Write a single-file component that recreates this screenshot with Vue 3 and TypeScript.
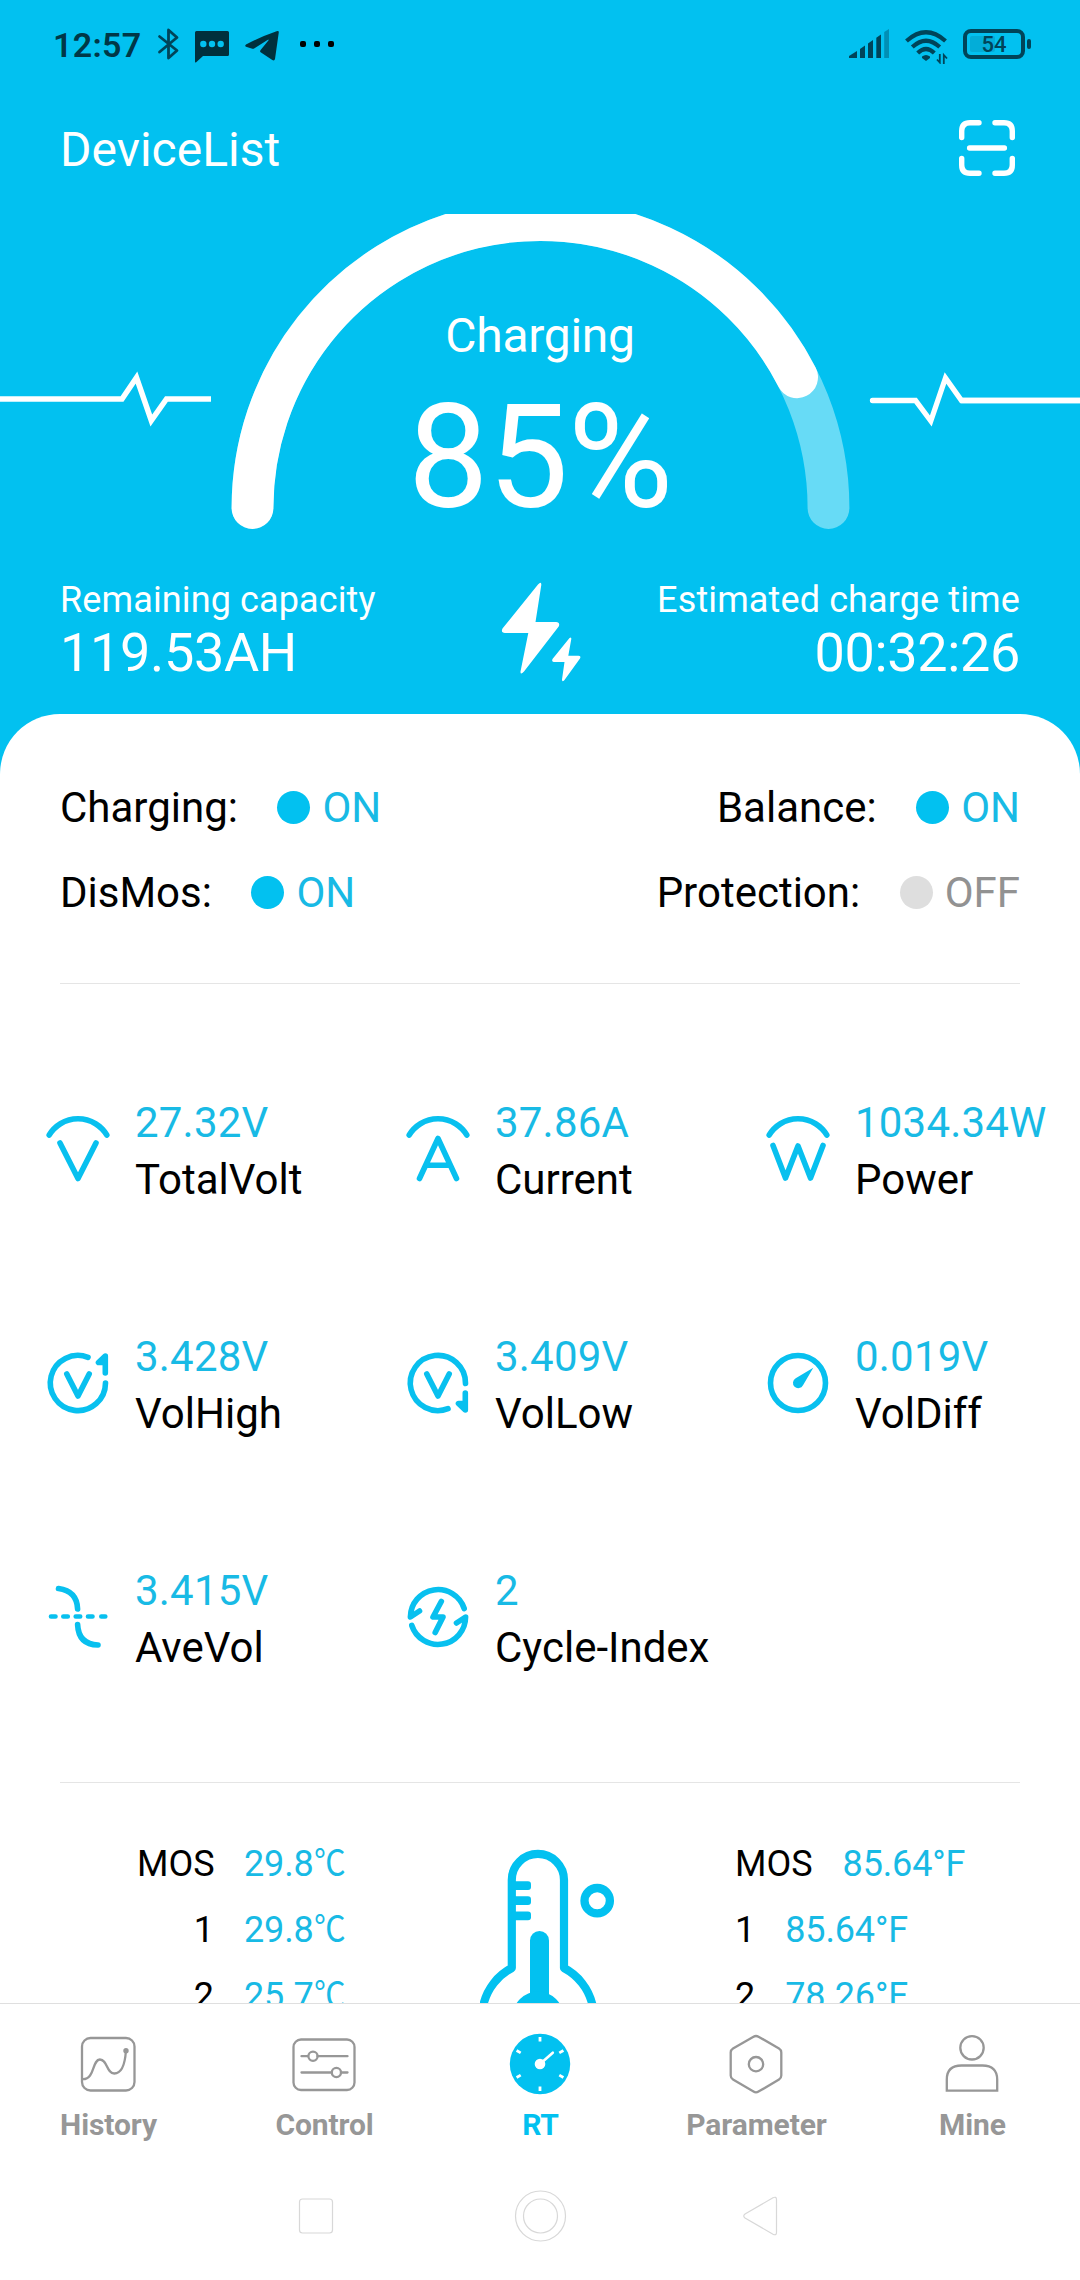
<script setup lang="ts">
interface SwitchState { label: string; on: boolean }
interface Metric { icon: string; value: string; label: string }
interface Temp { label: string; c: string; f: string }
interface Tab { icon: string; label: string; active?: boolean }

const switchRows: SwitchState[][] = [
  [{ label: 'Charging:', on: true }, { label: 'Balance:', on: true }],
  [{ label: 'DisMos:', on: true }, { label: 'Protection:', on: false }],
]

const metrics: Metric[] = [
  { icon: 'volt', value: '27.32V', label: 'TotalVolt' },
  { icon: 'amp', value: '37.86A', label: 'Current' },
  { icon: 'watt', value: '1034.34W', label: 'Power' },
  { icon: 'high', value: '3.428V', label: 'VolHigh' },
  { icon: 'low', value: '3.409V', label: 'VolLow' },
  { icon: 'diff', value: '0.019V', label: 'VolDiff' },
  { icon: 'avg', value: '3.415V', label: 'AveVol' },
  { icon: 'cycle', value: '2', label: 'Cycle-Index' },
]

const temps: Temp[] = [
  { label: 'MOS', c: '29.8', f: '85.64°F' },
  { label: '1', c: '29.8', f: '85.64°F' },
  { label: '2', c: '25.7', f: '78.26°F' },
]

const tabs: Tab[] = [
  { icon: 'history', label: 'History' },
  { icon: 'control', label: 'Control' },
  { icon: 'rt', label: 'RT', active: true },
  { icon: 'parameter', label: 'Parameter' },
  { icon: 'mine', label: 'Mine' },
]

const charge = 85
const radius = 288
const angle = Math.PI * (1 - charge / 100)
const arcEnd = `${(540.5 + radius * Math.cos(angle)).toFixed(2)} ${(508 - radius * Math.sin(angle)).toFixed(2)}`
</script>

<template>
  <div class="screen">
    <div class="hero">
      <header class="status">
        <span class="time">12:57</span>
        <svg class="bt" width="24" height="36" viewBox="0 0 24 36">
          <path d="M2.500 10.500L20 24.500L11.500 32V4L20 11.500L2.500 26" fill="none" stroke="#004459" stroke-width="2.800" stroke-linejoin="round" stroke-linecap="round" />
        </svg>
        <svg class="msg" width="34" height="32" viewBox="0 0 34 32">
          <path d="M1.500 0H32.500Q34 0 34 1.500V23.500Q34 25 32.500 25H8L1.200 31.200Q0 32 0 30.500V1.500Q0 0 1.500 0Z" fill="#00303d" />
          <g fill="#02c1f0"><circle cx="8.300" cy="13" r="3.200" /><circle cx="17" cy="13" r="3.200" /><circle cx="25.700" cy="13" r="3.200" /></g>
        </svg>
        <svg class="tg" width="34" height="30" viewBox="0 0 34 30">
          <path d="M33.800 1.200L30 28Q29.400 30.200 27.300 29L16 21.600Q14.400 20.400 15.600 18.900L23.600 9.200Q23.800 8.200 22.500 8.900L9.500 17.300Q8.200 18.200 6.600 17.600L1 15.800Q-.6 14.900 1 13.600Q16 5.500 31.600 .2Q33.900 -.5 33.800 1.200Z" fill="#00303d" />
        </svg>
        <span class="dots"><i /><i /><i /></span>
        <span class="spacer" />
        <svg class="sig" width="40" height="30" viewBox="0 0 40 30" fill="#004459">
          <path d="M0 29V27L8 22V29Z" /><path d="M11 29V20L16 16.500V29Z" /><path d="M19 29V14.500L24 11V29Z" /><path d="M27.300 29V8.700L32 5.500V29Z" />
          <path d="M35.200 29V3L40 0V29Z" opacity=".4" />
        </svg>
        <svg class="wifi" width="44" height="34" viewBox="0 0 44 34">
          <g fill="none" stroke="#004459" stroke-width="4.200">
            <path d="M1.500 11Q21 -6.500 40.500 11" /><path d="M7.300 17Q21 4.500 34.700 17" /><path d="M12.700 23Q21 15 29.300 23" />
          </g>
          <path d="M17 26.500Q21 23.500 25 26.500V28L21 31L17 28Z" fill="#004459" />
          <path d="M34.800 24V32.500L32 29.500M38.800 34V25L42 28.500" fill="none" stroke="#004459" stroke-width="1.800" />
        </svg>
        <span class="battery"><span class="level" /><b>54</b></span><span class="nub" />
      </header>

      <div class="titlebar">
        <span>DeviceList</span>
        <svg width="60" height="60" viewBox="-30 -30 60 60" fill="none" stroke="#fff" stroke-width="5.400" stroke-linecap="round" stroke-linejoin="round">
          <path d="M-25.300 -10.500V-17Q-25.300 -25.300 -17 -25.300H-8M8 -25.300H17Q25.300 -25.300 25.300 -17V-10.500M25.300 10.500V17Q25.300 25.300 17 25.300H8M-8 25.300H-17Q-25.300 25.300 -25.300 17V10.500M-17.400 0H17.400" />
        </svg>
      </div>

      <div class="gauge">
        <svg width="1080" height="326" viewBox="0 214 1080 326" fill="none" stroke="#fff">
          <path d="M252.500 508A288 288 0 0 1 828.500 508" stroke="#67dbf6" stroke-width="41.800" stroke-linecap="round" />
          <path :d="`M252.500 508A288 288 0 0 1 ${arcEnd}`" stroke-width="41.800" stroke-linecap="round" />
          <path d="M0 399H122L136.500 377.500L151.300 420.500L166.500 399H211" stroke-width="5.500" stroke-miterlimit="10" />
          <path d="M961 400.500H1080" stroke-width="5.500" />
          <path d="M872.500 400.500H915.500L930.800 421L945.500 378L961.500 400.500H1080" stroke-width="5.300" stroke-miterlimit="10" stroke-linecap="round" />
        </svg>
        <div class="reading">
          <div class="mode">Charging</div>
          <div class="percent">{{ charge }}%</div>
        </div>
      </div>

      <div class="stats">
        <div><p>Remaining capacity</p><strong>119.53AH</strong></div>
        <svg width="84" height="104" viewBox="499 580 84 104" fill="#fff">
          <path d="M538 584.500Q541.500 581 541.300 585L535.500 622H556Q560.500 622.300 558.700 626.500L524 671.500Q520.300 675.500 520.500 671.500L528.300 633H505Q500.500 632.500 502.500 628.500Z" />
          <path d="M569.500 638Q571.500 636.500 571.300 639L568.300 655.700H578.500Q581.300 656 580 658.500L564.300 680.300Q562 682.500 562 679.500L564.500 662H554Q551.300 661.500 552.500 659Z" />
        </svg>
        <div class="right"><p>Estimated charge time</p><strong>00:32:26</strong></div>
      </div>

      <main class="card">
        <section class="switches">
          <div v-for="(row, i) in switchRows" :key="i" class="switch-row">
            <div v-for="s in row" :key="s.label" class="switch" :class="{ off: !s.on }">
              <span>{{ s.label }}</span><i /><em>{{ s.on ? 'ON' : 'OFF' }}</em>
            </div>
          </div>
        </section>
        <hr>
        <section class="metrics">
          <div v-for="m in metrics" :key="m.label" class="metric">
            <svg width="72" height="72" viewBox="-36 -36 72 72" fill="none" stroke="#08c0ef" stroke-width="5.600" stroke-linecap="round" stroke-linejoin="round">
              <path v-if="['volt', 'amp', 'watt'].includes(m.icon)" d="M-28.800 -14A33.700 33.700 0 0 1 28.800 -14" />
              <path v-if="m.icon === 'volt'" d="M-18 -6L0 29.500L18 -6" />
              <path v-else-if="m.icon === 'amp'" d="M-18.500 29.500L0 -10.500L18.500 29.500M-12 16.300H12" />
              <path v-else-if="m.icon === 'watt'" d="M-25 -3.500L-12.500 29L0 -3L12.500 29L25 -3.500" />
              <template v-else-if="m.icon === 'high'">
                <path d="M10 -25.700A27.600 27.600 0 1 0 27.500 0M-11.200 -9L0 13L11.200 -9" />
                <path d="M27.300 -10V-27L20.500 -20.500H27.300" fill="#08c0ef" />
              </template>
              <template v-else-if="m.icon === 'low'">
                <path d="M27.500 0.500A27.600 27.600 0 1 0 10 25.700M-11.200 -9L0 13L11.200 -9" />
                <path d="M27.300 10V27L20.500 20.500H27.300" fill="#08c0ef" />
              </template>
              <template v-else-if="m.icon === 'diff'">
                <circle r="27.500" />
                <path d="M15.300 -15.300L5 2.200A5.300 5.300 0 1 1 -2.300 -4.800Z" fill="#08c0ef" stroke="none" />
              </template>
              <template v-else-if="m.icon === 'avg'">
                <path d="M-19.500 -28.500Q-1 -26 -.4 -8M-.4 7.500Q.5 27.500 20 28" />
                <path d="M-27 -.5H-22.500M-14.700 -.5H-10.200M-2.300 -.5H2.200M10 -.5H14.500M23.300 -.5H27.300" stroke-width="4.600" />
              </template>
              <template v-else>
                <path d="M26.200 -8.500A27.600 27.600 0 0 0 -27.600 0L-18.500 -6M-26.200 8.500A27.600 27.600 0 0 0 27.600 0L18.500 6" />
                <path d="M3.300 -15.500L-5 0H5L-2.800 15.500" />
              </template>
            </svg>
            <div class="metric-text"><span>{{ m.value }}</span><span>{{ m.label }}</span></div>
          </div>
        </section>
        <hr>
        <section class="temps">
          <div class="temp-col celsius">
            <div v-for="t in temps" :key="t.label" class="temp"><span>{{ t.label }}</span><em>{{ t.c }}<u>℃</u></em></div>
          </div>
          <div class="thermo">
            <svg width="140" height="240" viewBox="480 1845 140 240" fill="none" stroke="#02c1f0" stroke-width="8.200" stroke-linejoin="round">
              <path d="M511.800 1968V1880A26.100 26.100 0 0 1 564 1880V1968A56 56 0 1 1 511.800 1968Z" />
              <g fill="#02c1f0" stroke="none">
                <rect x="511" y="1881.300" width="20" height="8.700" rx="3" /><rect x="511" y="1896.300" width="20" height="8.700" rx="3" /><rect x="511" y="1911.500" width="20" height="8.700" rx="3" />
                <rect x="530" y="1931" width="19" height="80" rx="9.500" /><circle cx="538" cy="2017" r="25.500" />
              </g>
              <circle cx="597.200" cy="1900.700" r="12.700" stroke-width="8.300" />
            </svg>
          </div>
          <div class="temp-col">
            <div v-for="t in temps" :key="t.label" class="temp"><span>{{ t.label }}</span><em>{{ t.f }}</em></div>
          </div>
        </section>
      </main>
    </div>

    <nav class="tabs">
      <div v-for="t in tabs" :key="t.label" class="tab" :class="{ active: t.active }">
        <svg width="72" height="72" viewBox="-36 -36 72 72" fill="none" stroke="#979797" stroke-width="2.300" stroke-linecap="round" stroke-linejoin="round">
          <template v-if="t.icon === 'history'">
            <rect x="-26" y="-26" width="52.500" height="52.500" rx="8.500" />
            <path d="M-25 15.200C-13 15.200 -16 -4.500 -8.100 -4.500C-.5 -4.500 -1.500 9.500 6.300 9.500C13.500 9.500 17 0 17.900 -13" />
            <circle cx="18" cy="-13.300" r="2.700" fill="#979797" stroke="none" />
          </template>
          <template v-else-if="t.icon === 'control'">
            <rect x="-30.500" y="-24.500" width="61" height="50.500" rx="7.500" />
            <path d="M-22.500 -7.800H-16M-6.500 -7.800H23.500M-22.500 8.500H7.500M17 8.500H23.500" />
            <circle cx="-11" cy="-7.800" r="4.600" /><circle cx="12.400" cy="8.500" r="4.600" />
          </template>
          <template v-else-if="t.icon === 'rt'">
            <circle r="30.200" fill="#02c1f0" stroke="none" />
            <circle r="5.300" fill="#fff" stroke="none" />
            <path d="M0 0L12.800 -11.300" stroke="#fff" stroke-width="2.600" />
            <path d="M0 -27V-22.500M0 22.500V27M19.300 -11.100L23.400 -13.500M19.300 11.100L23.400 13.500M-19.300 -11.100L-23.400 -13.500M-19.300 11.100L-23.400 13.500" stroke="#fff" stroke-width="2.800" stroke-linecap="butt" />
          </template>
          <template v-else-if="t.icon === 'parameter'">
            <path d="M-2.500 -27.300Q0 -28.700 2.500 -27.300L23 -15.600Q25.300 -14.200 25.300 -11.500V11.500Q25.300 14.200 23 15.600L2.500 27.600Q0 29 -2.500 27.600L-23 15.600Q-25.300 14.200 -25.300 11.500V-11.500Q-25.300 -14.200 -23 -15.600Z" />
            <circle cy=".2" r="7.200" />
          </template>
          <template v-else>
            <circle cy="-16.200" r="11.700" />
            <path d="M-25.200 26.700V15.500Q-25.200 1.500 -10.500 1.500H10.500Q25.200 1.500 25.200 15.500V26.700Z" stroke-linejoin="miter" />
          </template>
        </svg>
        <span>{{ t.label }}</span>
      </div>
    </nav>

    <footer class="sysnav">
      <svg width="60" height="60" viewBox="-30 -30 60 60"><rect x="-16.500" y="-17" width="33" height="34" rx="3" /></svg>
      <svg width="60" height="60" viewBox="-30 -30 60 60"><circle cx=".5" r="25" /><circle cx=".5" r="17" /></svg>
      <svg width="60" height="60" viewBox="-30 -30 60 60"><path d="M-19 -2L9 -18.300Q12.500 -19.800 12.500 -16.500V16.500Q12.500 19.800 9 18.300L-19 2Q-21.500 0 -19 -2Z" /></svg>
    </footer>
  </div>
</template>

<style>
body { background: #fff; }
</style>

<style scoped>
.screen {
  width: 1080px;
  height: 2280px;
  display: flex;
  flex-direction: column;
  overflow: hidden;
  background: #fff;
  color: #000;
  font-family: Roboto, "Noto Sans CJK SC", sans-serif;
}
.hero { height: 2003px; flex: none; display: flex; flex-direction: column; background: #02c1f0; }
.status { height: 88px; flex: none; display: flex; align-items: center; box-sizing: border-box; padding: 0 49px 0 53px; }
.time { font-size: 34px; font-weight: 600; color: #003747; line-height: 40px; width: 104px; letter-spacing: .3px; margin-top: 2px; }
.msg { margin: 5px 0 0 14px; }
.tg { margin: 3px 0 0 16px; }
.dots { display: flex; gap: 8px; margin-left: 21px; }
.dots i { width: 6px; height: 6px; border-radius: 2px; background: #000; }
.spacer { flex: 1; }
.sig { margin-right: 16px; }
.wifi { margin: 6px 14px 0 0; }
.battery {
  position: relative; width: 62px; height: 30px; box-sizing: border-box; border: 4px solid #004459; border-radius: 8px;
  display: flex; justify-content: center; align-items: center;
}
.level { position: absolute; left: 3px; top: 3px; width: 25px; height: 16px; border-radius: 2px; background: #03add8; }
.battery b { position: relative; font-size: 22px; font-weight: 500; line-height: 22px; color: #004459; padding-top: 2px; }
.nub { width: 4px; height: 10px; border-radius: 2px; background: #004459; margin-left: 2px; }

.titlebar {
  height: 126px; flex: none; display: flex; justify-content: space-between; align-items: center;
  box-sizing: border-box; padding: 0 63px 3px 60px; color: #fff; font-size: 48px;
}
.titlebar svg { margin-bottom: 3px; }

.gauge { display: grid; height: 326px; flex: none; overflow: hidden; }
.gauge > * { grid-area: 1 / 1; }
.reading { display: flex; flex-direction: column; align-items: center; color: #fff; padding-top: 92px; }
.mode { font-size: 48px; line-height: 60px; letter-spacing: -.3px; }
.percent { font-size: 144px; line-height: 164px; height: 164px; margin-top: 10px; letter-spacing: -1px; }

.stats {
  height: 174px; flex: none; box-sizing: border-box; padding: 39px 60px 0; color: #fff;
  display: grid; grid-template-columns: 1fr auto 1fr; align-items: start;
}
.stats svg { margin-top: 1px; position: relative; left: 1px; }
.stats p { margin: 0; font-size: 36px; line-height: 42px; letter-spacing: .12px; }
.stats strong { display: block; font-size: 54px; font-weight: 400; line-height: 64px; letter-spacing: -.35px; }
.right { text-align: right; }

.card { flex: 1; min-height: 0; overflow: hidden; background: #fff; border-radius: 60px 60px 0 0; }
hr { height: 1px; border: 0; margin: 0 60px; background: #e5e5e5; }
.switches { padding: 51px 60px 48px; }
.switch-row { height: 85px; display: flex; justify-content: space-between; align-items: center; font-size: 42px; }
.switch { display: flex; align-items: center; }
.switch i { width: 33px; height: 33px; border-radius: 50%; background: #02c1f0; margin: 0 12px 0 39.500px; }
em { font-style: normal; color: #18bae5; }
.switch.off i { background: #dedede; }
.switch.off em { color: #929292; }

.metrics { display: grid; grid-template-columns: repeat(3, 360px); grid-auto-rows: 234px; padding: 48px 0; }
.metric { display: flex; align-items: center; padding-left: 42px; gap: 21px; }
.metric svg { flex: none; }
.metric-text { display: flex; flex-direction: column; font-size: 42px; line-height: 57px; padding-top: 4px; }
.metric-text span:first-child { color: #18bae5; letter-spacing: .2px; }

.temps { display: grid; grid-template-columns: repeat(3, 360px); font-size: 36px; line-height: 66px; }
.temp-col { padding: 48px 0 0 15px; }
.celsius { padding-left: 137px; }
.temp { display: flex; gap: 30px; white-space: nowrap; height: 66px; }
.temp em { letter-spacing: -.15px; }
.celsius .temp span { width: 77px; text-align: right; }
.temp u { display: inline-block; text-decoration: none; transform: scaleX(.88); transform-origin: 0 50%; }
.thermo { padding: 62px 0 0 120px; height: 158px; }

.tabs { height: 157px; flex: none; box-sizing: border-box; border-top: 1px solid #dfdfdf; display: flex; background: #fff; }
.tab { flex: 1; display: flex; flex-direction: column; align-items: center; padding-top: 24px; color: #979797; font-size: 30px; font-weight: 700; line-height: 36px; }
.tab span { margin-top: 7px; letter-spacing: -.1px; position: relative; left: .5px; }
.tab.active { color: #02c1f0; }

.sysnav { height: 120px; flex: none; box-sizing: border-box; padding: 0 204px 9px; display: flex; justify-content: center; align-items: center; gap: 164px; }
.sysnav svg { fill: none; stroke: #d8d8d8; stroke-width: 1.2; }
</style>
